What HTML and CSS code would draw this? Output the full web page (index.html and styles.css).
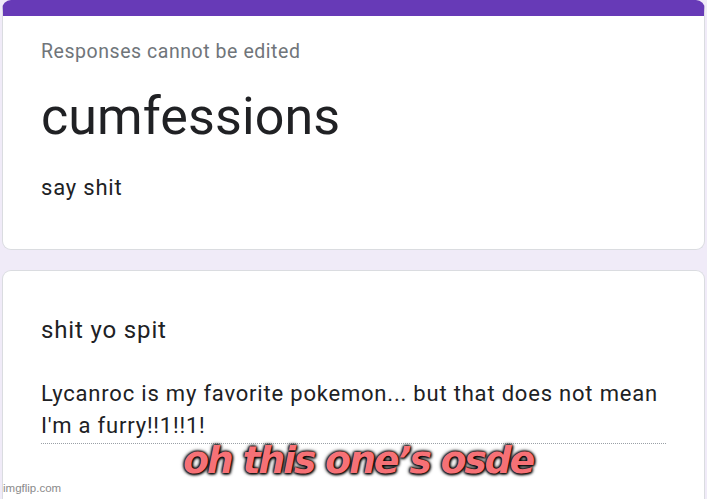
FILE: index.html
```html
<!DOCTYPE html>
<html>
<head>
<meta charset="utf-8">
<link rel="stylesheet" href="styles.css">
</head>
<body>
<div class="page">
  <div class="card header-card">
    <div class="notice">Responses cannot be edited</div>
    <h1 class="title">cumfessions</h1>
    <div class="desc">say shit</div>
  </div>
  <div class="card question-card">
    <div class="question">shit yo spit</div>
    <div class="answer">Lycanroc is my favorite pokemon... but that does not mean I'm a furry!!1!!1!</div>
  </div>
</div>
<div class="caption">oh this one’s osde</div>
<div class="watermark">imgflip.com</div>
</body>
</html>
```
FILE: styles.css
```css
html, body {
  margin: 0;
  padding: 0;
}
body {
  background: #f0ebf8;
  width: 707px;
  height: 499px;
  overflow: hidden;
  position: relative;
  font-family: Roboto, "Liberation Sans", Arial, sans-serif;
  color: #202124;
}
.page {
  padding: 0 2px 0 2px;
  display: flex;
  flex-direction: column;
  gap: 20px;
}
.card {
  background: #fff;
  border: 1px solid #dadce0;
  border-radius: 9px;
  padding-left: 38px;
  padding-right: 30px;
}
.header-card {
  border-top: 16px solid #673ab7;
  height: 250px;
  box-sizing: border-box;
  padding-top: 24px;
}
.notice {
  font-size: 19.5px;
  color: #70757a;
  letter-spacing: 0.55px;
  line-height: 24px;
}
.title {
  margin: 23px 0 0 0;
  font-weight: 400;
  font-size: 52px;
  line-height: 60px;
  letter-spacing: 0.1px;
}
.desc {
  margin-top: 27px;
  font-size: 22px;
  line-height: 28px;
  letter-spacing: 0.8px;
}
.question-card {
  height: 229px;
  padding-top: 44px;
  box-sizing: border-box;
  border-bottom: none;
  border-bottom-left-radius: 0;
  border-bottom-right-radius: 0;
}
.question {
  font-size: 24px;
  line-height: 30px;
  letter-spacing: 0.85px;
}
.answer {
  margin-top: 33px;
  font-size: 22px;
  line-height: 32px;
  letter-spacing: 0.8px;
  padding-bottom: 1px;
  width: 625px;
  border-bottom: 1px dotted #9aa0a6;
}
.caption {
  position: absolute;
  left: 183px;
  top: 438px;
  font-family: "DejaVu Sans", sans-serif;
  font-weight: 700;
  font-style: italic;
  font-size: 38px;
  letter-spacing: -2.3px;
  color: #f67176;
  text-shadow: 0 0 2px #000, 0 0 3px #000, 0 0 4px #000, 1px 1px 3px #000;
  white-space: nowrap;
}
.watermark {
  position: absolute;
  left: 3px;
  top: 482px;
  font-family: "Liberation Sans", Arial, sans-serif;
  font-size: 11.5px;
  color: #8a8a8a;
}
```
